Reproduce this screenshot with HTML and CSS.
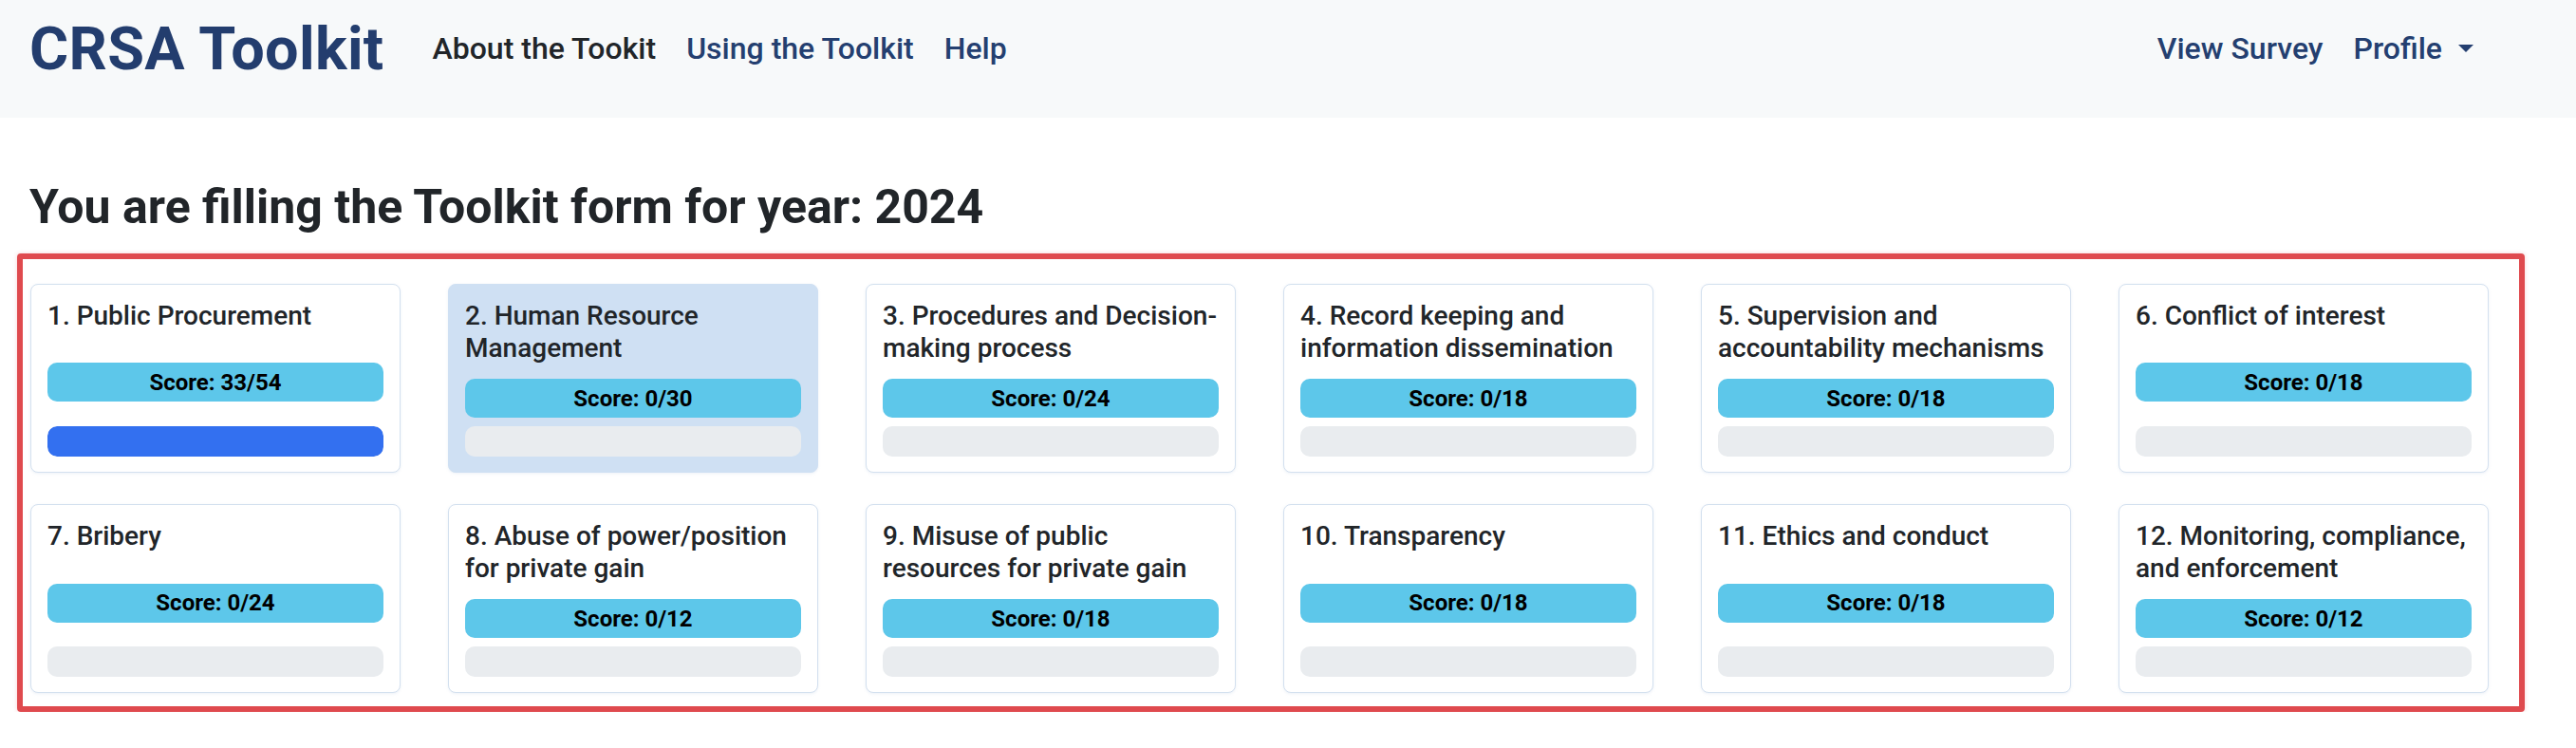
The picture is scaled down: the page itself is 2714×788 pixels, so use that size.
FILE: index.html
```html
<!DOCTYPE html>
<html lang="en">
<head>
<meta charset="utf-8">
<title>CRSA Toolkit</title>
<link rel="stylesheet" href="styles.css">
</head>
<body>
<nav class="navbar">
  <a class="brand" href="#">CRSA Toolkit</a>
  <ul class="nav-left">
    <li><a class="nav-link active" href="#">About the Tookit</a></li>
    <li><a class="nav-link" href="#">Using the Toolkit</a></li>
    <li><a class="nav-link" href="#">Help</a></li>
  </ul>
  <ul class="nav-right">
    <li><a class="nav-link" href="#">View Survey</a></li>
    <li><a class="nav-link dropdown" href="#">Profile<span class="caret"></span></a></li>
  </ul>
</nav>
<main class="main">
  <h3 class="year-title">You are filling the Toolkit form for year: 2024</h3>
  <section class="sections-box">
    <div class="card"><h6 class="card-title">1. Public Procurement</h6><div class="mid"><div class="score">Score: 33/54</div></div><div class="progress"><div class="progress-fill" style="width:100%"></div></div></div>
    <div class="card selected"><h6 class="card-title">2. Human Resource Management</h6><div class="mid"><div class="score">Score: 0/30</div></div><div class="progress"></div></div>
    <div class="card"><h6 class="card-title">3. Procedures and Decision-making process</h6><div class="mid"><div class="score">Score: 0/24</div></div><div class="progress"></div></div>
    <div class="card"><h6 class="card-title">4. Record keeping and information dissemination</h6><div class="mid"><div class="score">Score: 0/18</div></div><div class="progress"></div></div>
    <div class="card"><h6 class="card-title">5. Supervision and accountability mechanisms</h6><div class="mid"><div class="score">Score: 0/18</div></div><div class="progress"></div></div>
    <div class="card"><h6 class="card-title">6. Conflict of interest</h6><div class="mid"><div class="score">Score: 0/18</div></div><div class="progress"></div></div>
    <div class="card"><h6 class="card-title">7. Bribery</h6><div class="mid"><div class="score">Score: 0/24</div></div><div class="progress"></div></div>
    <div class="card"><h6 class="card-title">8. Abuse of power/position for private gain</h6><div class="mid"><div class="score">Score: 0/12</div></div><div class="progress"></div></div>
    <div class="card"><h6 class="card-title">9. Misuse of public resources for private gain</h6><div class="mid"><div class="score">Score: 0/18</div></div><div class="progress"></div></div>
    <div class="card"><h6 class="card-title">10. Transparency</h6><div class="mid"><div class="score">Score: 0/18</div></div><div class="progress"></div></div>
    <div class="card"><h6 class="card-title">11. Ethics and conduct</h6><div class="mid"><div class="score">Score: 0/18</div></div><div class="progress"></div></div>
    <div class="card"><h6 class="card-title">12. Monitoring, compliance, and enforcement</h6><div class="mid"><div class="score">Score: 0/12</div></div><div class="progress"></div></div>
  </section>
</main>
</body>
</html>
```
FILE: styles.css
```css
* { box-sizing: border-box; }
html, body { margin: 0; padding: 0; }
body {
  font-family: Roboto, "Liberation Sans", Arial, sans-serif;
  color: #212529;
  background: #ffffff;
}
a { text-decoration: none; }
ul { list-style: none; margin: 0; padding: 0; }

.navbar {
  height: 124px;
  background: #f7f9fa;
  display: flex;
  align-items: center;
  padding: 0 31px 22px 31px;
}
.brand {
  font-size: 63px;
  font-weight: 700;
  color: #233d6e;
  line-height: 1;
  margin-right: 51px;
  letter-spacing: 0.3px;
}
.nav-left, .nav-right {
  display: flex;
  align-items: center;
  gap: 32px;
}
.nav-right { margin-left: auto; margin-right: 77px; }
.nav-link {
  font-size: 32px;
  font-weight: 500;
  color: #243f70;
}
.nav-link.active { color: #212529; }
.caret {
  display: inline-block;
  margin-left: 17px;
  vertical-align: 7px;
  border-top: 8px solid #243f70;
  border-left: 8.5px solid transparent;
  border-right: 8.5px solid transparent;
}

.main { padding: 0 0 0 18px; }
.year-title {
  margin: 64px 0 19px 13px;
  font-size: 50px;
  line-height: 1.2;
  font-weight: 700;
  color: #212529;
}
.sections-box {
  width: 2642px;
  border: 6px solid #df4a4e;
  border-radius: 4px;
  box-shadow: 0 0 4px rgba(223, 74, 78, 0.25);
  padding: 26px 31px 14px 8px;
  display: grid;
  grid-template-columns: repeat(6, 390px);
  column-gap: 50px;
  row-gap: 33px;
}
.card {
  background: #ffffff;
  border: 1px solid #d3e0ef;
  border-radius: 8px;
  box-shadow: 0 1px 3px rgba(180, 200, 225, 0.25);
  padding: 16px 17px;
  display: flex;
  flex-direction: column;
}
.card.selected {
  background: #cfe0f3;
  border-color: #cfe0f3;
}
.card-title {
  margin: 0 0 7px 0;
  font-size: 28px;
  line-height: 1.2;
  font-weight: 500;
  color: #212529;
}
.mid {
  flex: 1;
  display: flex;
  align-items: center;
  padding: 9px 0;
}
.score {
  width: 100%;
  height: 41px;
  background: #5dc7ea;
  border-radius: 10px;
  color: #000;
  font-size: 24px;
  font-weight: 700;
  display: flex;
  align-items: center;
  justify-content: center;
}
.progress {
  height: 32px;
  background: #e9ecef;
  border-radius: 10px;
  overflow: hidden;
}
.progress-fill {
  height: 100%;
  background: #3370f0;
  border-radius: 10px;
}
```
